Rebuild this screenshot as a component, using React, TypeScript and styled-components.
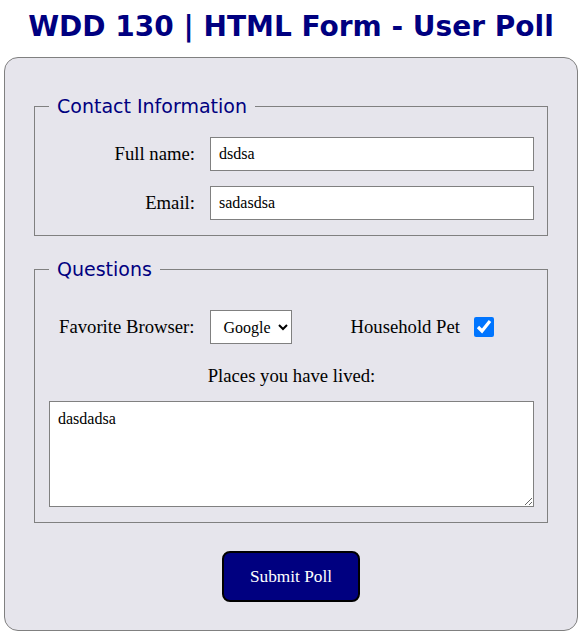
import React, { useState } from 'react';
import styled, { createGlobalStyle } from 'styled-components';

const navy = '#000080';
const line = '#808080';

const GlobalStyle = createGlobalStyle`
  body {
    margin: 0;
    background: #ffffff;
    font-family: "Liberation Serif", "Times New Roman", serif;
  }
`;

const Page = styled.div`
  padding: 10px 5px 8px 4px;
`;

const Title = styled.h1`
  margin: 0 0 14px;
  text-align: center;
  font-family: "DejaVu Sans", Verdana, sans-serif;
  font-size: 28px;
  font-weight: bold;
  line-height: 33px;
  color: ${navy};
`;

const PollForm = styled.form`
  display: flex;
  flex-direction: column;
  gap: 22px;
  background: #e6e5ec;
  border: 1px solid ${line};
  border-radius: 14px;
  padding: 37px 29px 28px;
`;

const Group = styled.fieldset`
  margin: 0;
  border: 1px solid ${line};
  padding: 20px 13px 15px 14px;
  min-width: 0;
`;

const Legend = styled.legend`
  margin-left: 0;
  padding: 0 8px;
  font-family: "DejaVu Sans", Verdana, sans-serif;
  font-size: 19px;
  line-height: 22px;
  color: ${navy};
`;

const FieldGrid = styled.div`
  display: grid;
  grid-template-columns: 1fr 324px;
  column-gap: 15px;
  row-gap: 15px;
  align-items: center;
`;

const FieldLabel = styled.label`
  text-align: right;
  font-size: 18.7px;
  line-height: 22px;
`;

const TextInput = styled.input`
  box-sizing: border-box;
  height: 34px;
  width: 100%;
  margin: 0;
  padding: 0 8px;
  border: 1px solid ${line};
  background: #fff;
  font-family: "Liberation Serif", "Times New Roman", serif;
  font-size: 16px;
  color: #000;
  outline: none;
`;

const QuestionRow = styled.div`
  display: flex;
  align-items: center;
  padding-left: 10px;
  margin-top: 10px;
`;

const InlineLabel = styled.label<{ $gapAfter: number }>`
  font-size: 18.7px;
  line-height: 22px;
  margin-right: ${(p) => p.$gapAfter}px;
`;

const Select = styled.select`
  box-sizing: border-box;
  width: 82px;
  height: 34px;
  margin: 0 58px 0 0;
  padding: 0 4px 0 8px;
  border: 1px solid ${line};
  border-radius: 0;
  background: #fff;
  font-family: "Liberation Serif", "Times New Roman", serif;
  font-size: 16px;
  color: #000;
`;

const Checkbox = styled.input`
  width: 20px;
  height: 20px;
  margin: 0;
`;

const CenterLabel = styled.label`
  display: block;
  text-align: center;
  font-size: 18.7px;
  line-height: 22px;
  margin: 21px 0 14px;
`;

const TextArea = styled.textarea`
  box-sizing: border-box;
  display: block;
  width: 100%;
  height: 106px;
  margin: 0;
  padding: 8px;
  border: 1px solid ${line};
  background: #fff;
  font-family: "Liberation Serif", "Times New Roman", serif;
  font-size: 16px;
  color: #000;
  outline: none;
`;

const SubmitButton = styled.button`
  align-self: center;
  width: 138px;
  height: 51px;
  margin-top: 6px;
  background: ${navy};
  color: #fff;
  border: 2px solid #000;
  border-radius: 8px;
  font-family: "Liberation Serif", "Times New Roman", serif;
  font-size: 17.3px;
  cursor: pointer;
`;

const App: React.FC = () => {
  const [name, setName] = useState('dsdsa');
  const [email, setEmail] = useState('sadasdsa');
  const [browser, setBrowser] = useState('google');
  const [pet, setPet] = useState(true);
  const [places, setPlaces] = useState('dasdadsa');

  return (
    <>
      <GlobalStyle />
      <Page>
        <Title>WDD 130 | HTML Form - User Poll</Title>
        <PollForm onSubmit={(e) => e.preventDefault()}>
          <Group>
            <Legend>Contact Information</Legend>
            <FieldGrid>
              <FieldLabel htmlFor="fullname">Full name:</FieldLabel>
              <TextInput id="fullname" value={name} onChange={(e) => setName(e.target.value)} />
              <FieldLabel htmlFor="email">Email:</FieldLabel>
              <TextInput id="email" value={email} onChange={(e) => setEmail(e.target.value)} />
            </FieldGrid>
          </Group>

          <Group>
            <Legend>Questions</Legend>
            <QuestionRow>
              <InlineLabel htmlFor="browser" $gapAfter={16}>Favorite Browser:</InlineLabel>
              <Select id="browser" value={browser} onChange={(e) => setBrowser(e.target.value)}>
                <option value="google">Google</option>
                <option value="firefox">Firefox</option>
                <option value="edge">Edge</option>
                <option value="safari">Safari</option>
              </Select>
              <InlineLabel htmlFor="pet" $gapAfter={14}>Household Pet</InlineLabel>
              <Checkbox id="pet" type="checkbox" checked={pet} onChange={(e) => setPet(e.target.checked)} />
            </QuestionRow>
            <CenterLabel htmlFor="places">Places you have lived:</CenterLabel>
            <TextArea id="places" value={places} onChange={(e) => setPlaces(e.target.value)} />
          </Group>

          <SubmitButton type="submit">Submit Poll</SubmitButton>
        </PollForm>
      </Page>
    </>
  );
};

export default App;
